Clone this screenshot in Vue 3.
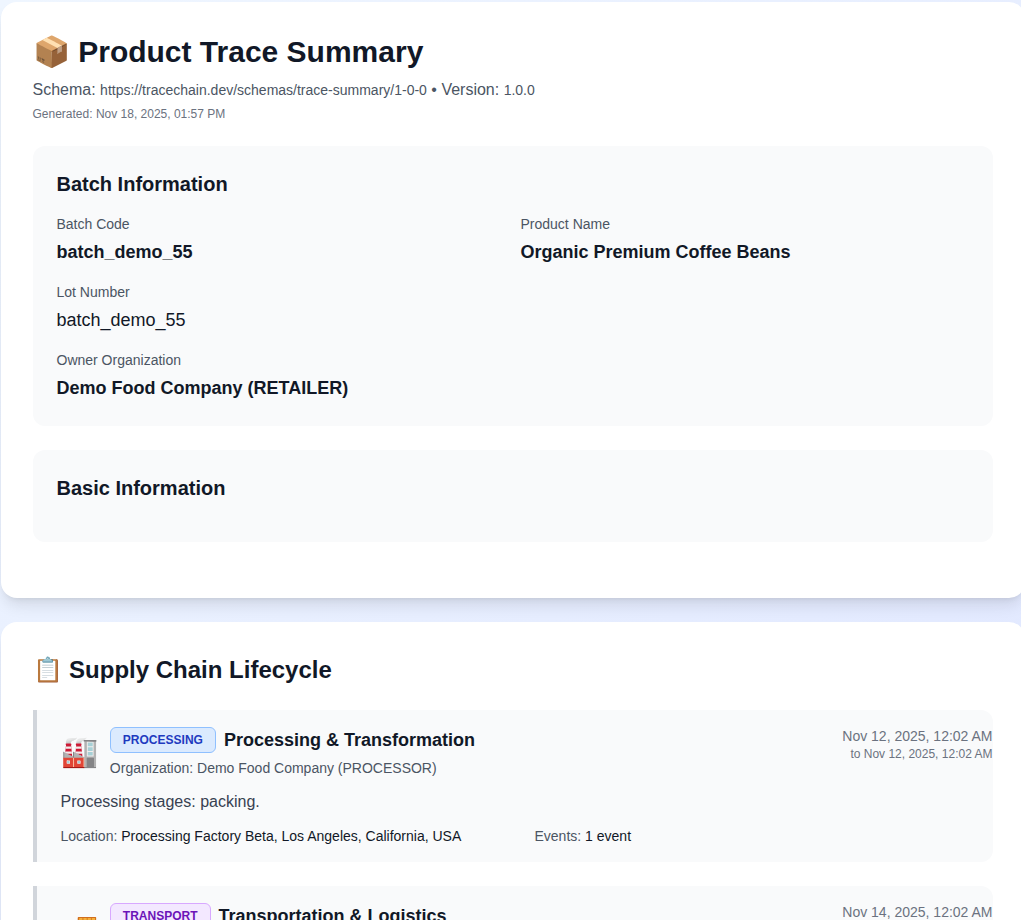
<template>
  <div class="page">
    <section class="card">
      <h1 class="title"><span class="emoji">📦</span> Product Trace Summary</h1>
      <p class="schema">
        Schema: <span class="small">https://tracechain.dev/schemas/trace-summary/1-0-0</span> • Version:
        <span class="small">1.0.0</span>
      </p>
      <p class="generated">Generated: Nov 18, 2025, 01:57 PM</p>

      <div class="panel batch">
        <h2 class="panel-title">Batch Information</h2>
        <div class="info-grid">
          <div v-for="item in batchInfo" :key="item.label" class="info-item" :class="{ wide: item.wide }">
            <div class="info-label">{{ item.label }}</div>
            <div class="info-value" :class="{ strong: item.strong }">{{ item.value }}</div>
          </div>
        </div>
      </div>

      <div class="panel basic">
        <h2 class="panel-title">Basic Information</h2>
      </div>
    </section>

    <section class="card lifecycle">
      <h2 class="section-title"><span class="emoji">📋</span> Supply Chain Lifecycle</h2>

      <article v-for="stage in stages" :key="stage.badge" class="stage">
        <div class="stage-head">
          <div class="stage-main">
            <span class="stage-icon emoji">{{ stage.icon }}</span>
            <div>
              <div class="stage-title-row">
                <span class="badge" :class="stage.badgeClass">{{ stage.badge }}</span>
                <h3 class="stage-title">{{ stage.title }}</h3>
              </div>
              <div class="stage-org">{{ stage.org }}</div>
            </div>
          </div>
          <div class="stage-dates">
            <div class="date-from">{{ stage.from }}</div>
            <div class="date-to">{{ stage.to }}</div>
          </div>
        </div>
        <p class="stage-desc">{{ stage.desc }}</p>
        <div class="stage-meta">
          <div><span class="meta-label">Location:</span> {{ stage.location }}</div>
          <div><span class="meta-label">Events:</span> {{ stage.events }}</div>
        </div>
      </article>
    </section>
  </div>
</template>

<script setup>
const batchInfo = [
  { label: 'Batch Code', value: 'batch_demo_55', strong: true },
  { label: 'Product Name', value: 'Organic Premium Coffee Beans', strong: true },
  { label: 'Lot Number', value: 'batch_demo_55', strong: false, wide: true },
  { label: 'Owner Organization', value: 'Demo Food Company (RETAILER)', strong: true, wide: true }
]

const stages = [
  {
    icon: '🏭',
    badge: 'PROCESSING',
    badgeClass: 'badge-blue',
    title: 'Processing & Transformation',
    org: 'Organization: Demo Food Company (PROCESSOR)',
    from: 'Nov 12, 2025, 12:02 AM',
    to: 'to Nov 12, 2025, 12:02 AM',
    desc: 'Processing stages: packing.',
    location: 'Processing Factory Beta, Los Angeles, California, USA',
    events: '1 event'
  },
  {
    icon: '🚚',
    badge: 'TRANSPORT',
    badgeClass: 'badge-purple',
    title: 'Transportation & Logistics',
    org: 'Organization: Demo Food Company (CARRIER)',
    from: 'Nov 14, 2025, 12:02 AM',
    to: 'to Nov 14, 2025, 12:02 AM',
    desc: 'Transport stages: shipping.',
    location: 'Los Angeles, California, USA',
    events: '1 event'
  }
]
</script>

<style>
html,
body {
  margin: 0;
  overflow: hidden;
  background: #eff6ff;
}
</style>

<style scoped>
.page {
  width: 1024px;
  padding: 2px 0 0 0.5px;
  height: 918px;
  overflow: hidden;
  background: linear-gradient(135deg, #eff6ff 0%, #e0e7ff 100%);
  font-family: "Liberation Sans", Arial, sans-serif;
  color: #111827;
}

.card {
  background: #fff;
  border-radius: 16px;
  padding: 32px;
  margin-bottom: 24px;
  box-shadow: 0 10px 15px -3px rgba(0, 0, 0, 0.1), 0 4px 6px -4px rgba(0, 0, 0, 0.1);
}

.emoji {
  font-family: "Noto Color Emoji", sans-serif;
  font-weight: 400;
  margin-left: 1px;
  margin-right: -1px;
}

.title {
  margin: 0 0 8px;
  font-size: 30px;
  line-height: 36px;
  font-weight: 700;
}

.schema {
  margin: 0;
  font-size: 16px;
  line-height: 24px;
  color: #4b5563;
}

.small {
  font-size: 14px;
}

.generated {
  margin: 4px 0 0;
  font-size: 12px;
  line-height: 16px;
  color: #6b7280;
}

.panel {
  background: #f9fafb;
  border-radius: 12px;
  padding: 24px;
}

.batch {
  margin-top: 24px;
  margin-bottom: 24px;
}

.basic {
  margin-bottom: 24px;
}

.panel-title {
  margin: 0 0 16px;
  font-size: 20px;
  line-height: 28px;
  font-weight: 700;
}

.info-grid {
  display: grid;
  grid-template-columns: 1fr 1fr;
  gap: 16px;
}

.wide {
  grid-column: 1 / -1;
}

.info-label {
  font-size: 14px;
  line-height: 20px;
  color: #4b5563;
  margin-bottom: 4px;
}

.info-value {
  font-size: 18px;
  line-height: 28px;
}

.strong {
  font-weight: 700;
}

.section-title {
  margin: 0 0 24px;
  font-size: 24px;
  line-height: 32px;
  font-weight: 700;
}

.stage {
  background: #f9fafb;
  border-left: 4px solid #d1d5db;
  border-radius: 0 12px 12px 0;
  padding: 16px 0 16px 24px;
  margin-bottom: 24px;
}

.stage-head {
  display: flex;
  justify-content: space-between;
  align-items: flex-start;
}

.stage-main {
  display: flex;
  align-items: center;
  gap: 12px;
}

.stage-icon {
  font-size: 30px;
  line-height: 36px;
}

.stage-title-row {
  display: flex;
  align-items: center;
  gap: 8px;
}

.badge {
  font-size: 12px;
  line-height: 16px;
  font-weight: 700;
  padding: 4px 12px;
  border-radius: 6px;
  border: 1px solid;
}

.badge-blue {
  background: #dbeafe;
  color: #1e3ac0;
  border-color: #8fc0ff;
}

.badge-purple {
  background: #f3e8ff;
  color: #6b14b8;
  border-color: #d8a8ff;
}

.stage-title {
  margin: 0;
  font-size: 18px;
  line-height: 28px;
  font-weight: 700;
}

.stage-org {
  margin-top: 4px;
  font-size: 14px;
  line-height: 20px;
  color: #4b5563;
}

.stage-dates {
  text-align: right;
  color: #6b7280;
}

.date-from {
  font-size: 14px;
  line-height: 20px;
}

.date-to {
  font-size: 12px;
  line-height: 16px;
}

.stage-desc {
  margin: 12px 0 0;
  font-size: 16px;
  line-height: 24px;
  color: #374151;
}

.stage-meta {
  display: grid;
  grid-template-columns: 1fr 1fr;
  gap: 16px;
  margin-top: 12px;
  font-size: 14px;
  line-height: 20px;
}

.meta-label {
  color: #4b5563;
}
</style>
